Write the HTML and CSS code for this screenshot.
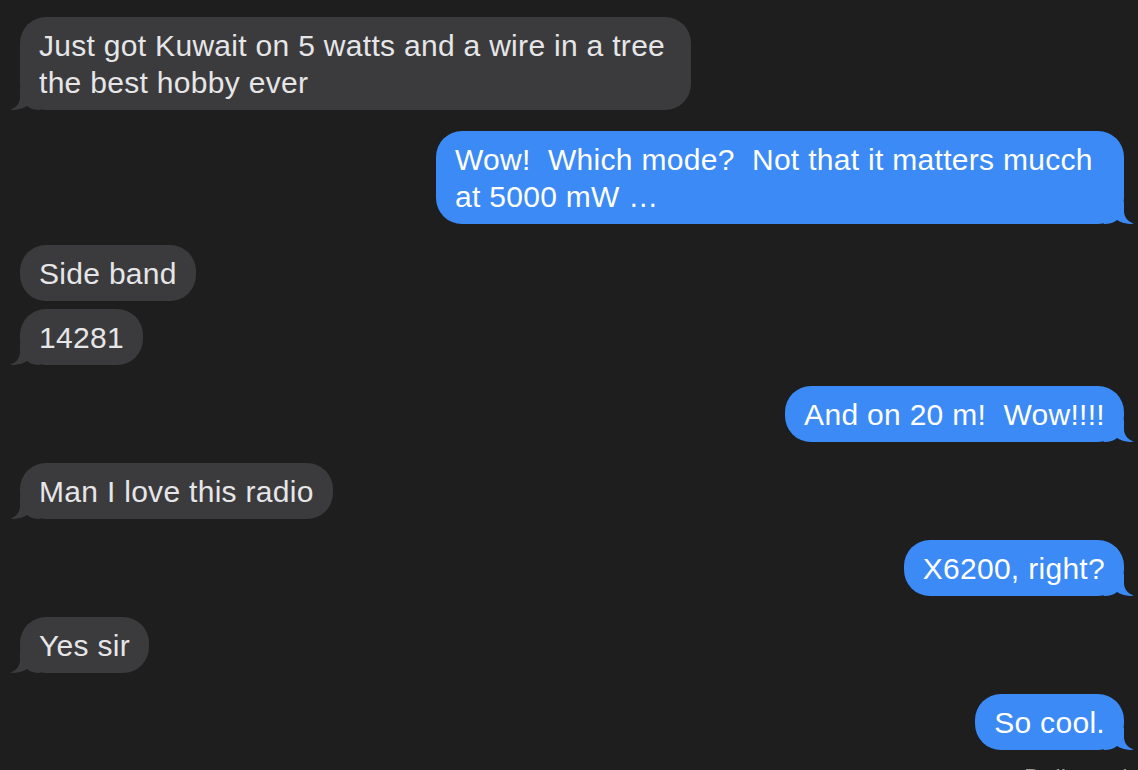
FILE: index.html
```html
<!DOCTYPE html>
<html>
<head>
<meta charset="utf-8">
<link rel="stylesheet" href="styles.css">
</head>
<body>
<div class="chat">
  <div class="group in">
    <div class="bubble tail wrap1">Just got Kuwait on 5 watts and a wire in a tree the best hobby ever<svg class="tail-svg" viewBox="0 0 30 22"><path d="M10 0 L10 9 C10 15 6 20 0 21.6 C6 22.6 13 21 17 18 C20 20.5 24 22 30 22 L30 0 Z"/></svg></div>
  </div>
  <div class="group out">
    <div class="bubble tail wrap2">Wow!  Which mode?  Not that it matters mucch at 5000 mW …<svg class="tail-svg" viewBox="0 0 30 22"><path d="M20 0 L20 9 C20 15 24 20 30 21.6 C24 22.6 17 21 13 18 C10 20.5 6 22 0 22 L0 0 Z"/></svg></div>
  </div>
  <div class="group in">
    <div class="bubble">Side band</div>
    <div class="bubble tail">14281<svg class="tail-svg" viewBox="0 0 30 22"><path d="M10 0 L10 9 C10 15 6 20 0 21.6 C6 22.6 13 21 17 18 C20 20.5 24 22 30 22 L30 0 Z"/></svg></div>
  </div>
  <div class="group out">
    <div class="bubble tail">And on 20 m!  Wow!!!!<svg class="tail-svg" viewBox="0 0 30 22"><path d="M20 0 L20 9 C20 15 24 20 30 21.6 C24 22.6 17 21 13 18 C10 20.5 6 22 0 22 L0 0 Z"/></svg></div>
  </div>
  <div class="group in">
    <div class="bubble tail">Man I love this radio<svg class="tail-svg" viewBox="0 0 30 22"><path d="M10 0 L10 9 C10 15 6 20 0 21.6 C6 22.6 13 21 17 18 C20 20.5 24 22 30 22 L30 0 Z"/></svg></div>
  </div>
  <div class="group out">
    <div class="bubble tail">X6200, right?<svg class="tail-svg" viewBox="0 0 30 22"><path d="M20 0 L20 9 C20 15 24 20 30 21.6 C24 22.6 17 21 13 18 C10 20.5 6 22 0 22 L0 0 Z"/></svg></div>
  </div>
  <div class="group in">
    <div class="bubble tail">Yes sir<svg class="tail-svg" viewBox="0 0 30 22"><path d="M10 0 L10 9 C10 15 6 20 0 21.6 C6 22.6 13 21 17 18 C20 20.5 24 22 30 22 L30 0 Z"/></svg></div>
  </div>
  <div class="group out">
    <div class="bubble tail">So cool.<svg class="tail-svg" viewBox="0 0 30 22"><path d="M20 0 L20 9 C20 15 24 20 30 21.6 C24 22.6 17 21 13 18 C10 20.5 6 22 0 22 L0 0 Z"/></svg></div>
    <div class="status">Delivered</div>
  </div>
</div>
</body>
</html>
```

FILE: styles.css
```css
html, body {
  margin: 0;
  padding: 0;
  background: #1e1e1e;
  height: 770px;
  overflow: hidden;
}

.chat {
  display: flex;
  flex-direction: column;
  gap: 21px;
  padding: 17px 14px 0 20px;
  font-family: "Liberation Sans", Arial, sans-serif;
  font-size: 30px;
  letter-spacing: 0.3px;
}

.group {
  display: flex;
  flex-direction: column;
  gap: 8px;
}

.group.in {
  align-items: flex-start;
}

.group.out {
  align-items: flex-end;
}

.bubble {
  position: relative;
  padding: 9.5px 19px;
  line-height: 37px;
  border-radius: 26px;
  white-space: pre-wrap;
}

.wrap1 {
  max-width: 671px;
  box-sizing: border-box;
}

.wrap2 {
  max-width: 688px;
  box-sizing: border-box;
}

.in .bubble {
  background: #3b3b3d;
  color: #e6e6e8;
}

.out .bubble {
  background: #3b8af6;
  color: #ffffff;
}

.tail-svg {
  position: absolute;
  bottom: 0;
  width: 30px;
  height: 22px;
}

.in .tail-svg {
  left: -10px;
  fill: #3b3b3d;
}

.out .tail-svg {
  right: -10px;
  fill: #3b8af6;
}

.status {
  margin-top: 6px;
  margin-right: -4px;
  font-size: 24px;
  line-height: 28px;
  letter-spacing: 0.3px;
  color: #98989d;
}
```
